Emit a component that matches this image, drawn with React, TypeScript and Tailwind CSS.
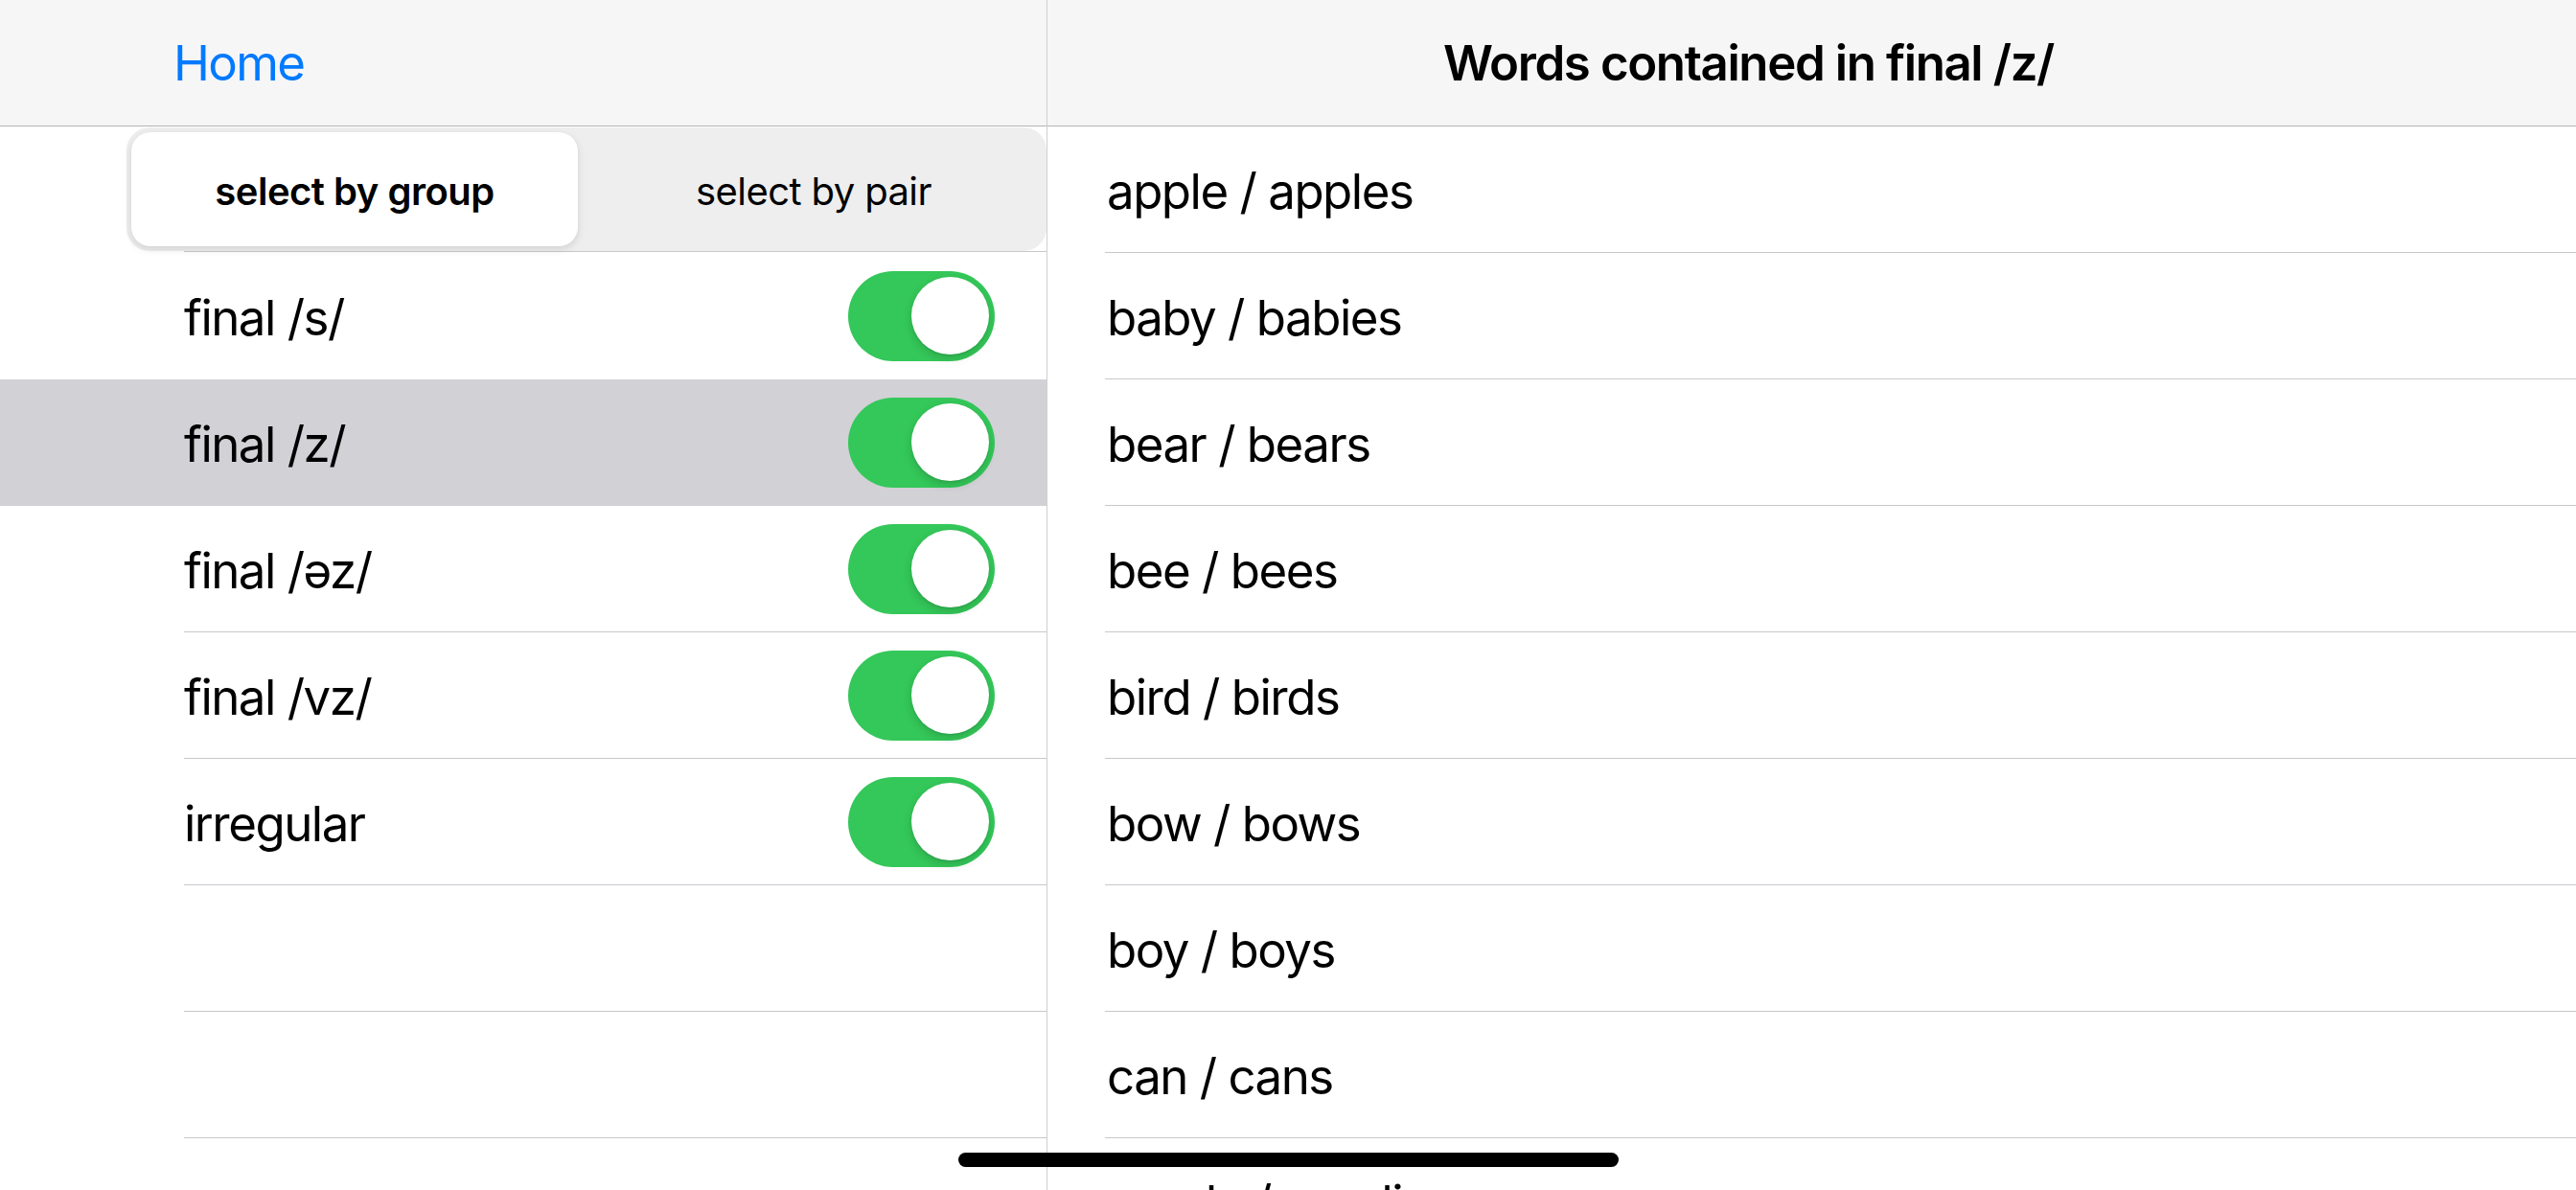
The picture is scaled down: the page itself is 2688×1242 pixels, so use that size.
import React from "react";

const groups = [
  { label: "final /s/", selected: false },
  { label: "final /z/", selected: true },
  { label: "final /əz/", selected: false },
  { label: "final /vz/", selected: false },
  { label: "irregular", selected: false },
];

const words = [
  "apple / apples",
  "baby / babies",
  "bear / bears",
  "bee / bees",
  "bird / birds",
  "bow / bows",
  "boy / boys",
  "can / cans",
  "candy / candies",
];

function Toggle() {
  return (
    <div className="flex h-[94px] w-[153px] items-center justify-end rounded-full bg-[#34c759] pr-[6px]">
      <div className="h-[81px] w-[81px] rounded-full bg-white shadow-[0_4px_10px_rgba(0,0,0,0.15),0_1px_2px_rgba(0,0,0,0.1)]" />
    </div>
  );
}

export default function App() {
  return (
    <div
      className="relative flex h-[1242px] w-[2688px] overflow-hidden bg-white text-black"
      style={{ fontFamily: 'Inter, "Noto Sans", sans-serif' }}
    >
      {/* Left pane */}
      <div className="flex w-[1092px] shrink-0 flex-col">
        <div className="flex h-[132px] shrink-0 items-center border-b border-[#b4b4b4] bg-[#f7f6f7] pl-[181px]">
          <span className="text-[51px] leading-none tracking-[-1.6px] text-[#007aff]">Home</span>
        </div>
        <div className="relative h-[132px] shrink-0">
          <div className="ml-[132px] mt-px flex h-[129px] rounded-[24px] bg-[#eeeeef] p-[5px]">
            <div className="flex w-[466px] items-center justify-center rounded-[20px] bg-white pt-[4px] shadow-[0_3px_8px_rgba(0,0,0,0.12),0_0_1px_rgba(0,0,0,0.04)]">
              <span className="text-[40px] font-semibold tracking-[-0.5px]">select by group</span>
            </div>
            <div className="flex flex-1 items-center justify-center pt-[4px] pl-[8px]">
              <span className="text-[40px] font-normal tracking-[-0.6px]">select by pair</span>
            </div>
          </div>
          <div className="ml-[192px] h-px bg-[#c8c7cc]" />
        </div>
        {groups.map((g, i) => {
          const hideSep = g.selected || (groups[i + 1] && groups[i + 1].selected);
          return (
            <div
              key={g.label}
              className={g.selected ? "h-[132px] shrink-0 bg-[#d1d1d6]" : "h-[132px] shrink-0"}
            >
              <div
                className={
                  hideSep
                    ? "ml-[192px] flex h-full items-center justify-between border-b border-transparent pr-[54px]"
                    : "ml-[192px] flex h-full items-center justify-between border-b border-[#c8c7cc] pr-[54px]"
                }
              >
                <span className="pt-[5px] text-[51px] tracking-[-1.5px]">{g.label}</span>
                <Toggle />
              </div>
            </div>
          );
        })}
        {[0, 1, 2].map((i) => (
          <div key={i} className="h-[132px] shrink-0">
            <div className="ml-[192px] h-full border-b border-[#c8c7cc]" />
          </div>
        ))}
      </div>

      {/* Right pane */}
      <div className="flex flex-1 flex-col border-l border-[#cfcfd2]">
        <div className="flex h-[132px] shrink-0 items-center justify-center border-b border-[#b4b4b4] bg-[#f7f6f7] pr-[132px]">
          <span className="text-[51px] font-semibold leading-none tracking-[-1.4px]">
            Words contained in final /z/
          </span>
        </div>
        {words.map((w) => (
          <div key={w} className="h-[132px] shrink-0">
            <div className="ml-[60px] flex h-full items-center border-b border-[#c8c7cc] pl-[2px]">
              <span className="pt-[5px] text-[51px] tracking-[-1.5px]">{w}</span>
            </div>
          </div>
        ))}
      </div>

      {/* Home indicator */}
      <div className="absolute left-[1000px] top-[1203px] h-[15px] w-[689px] rounded-full bg-black" />
    </div>
  );
}
